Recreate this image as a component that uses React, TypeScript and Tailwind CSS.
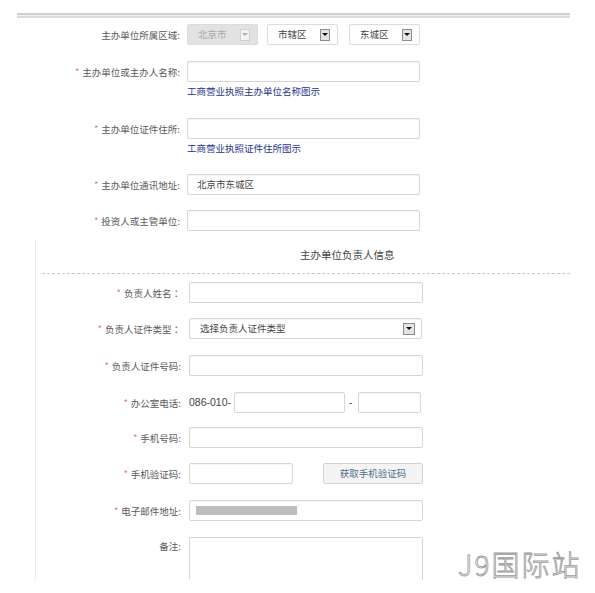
import React from "react";

const cjk = "font-['Noto_Sans_CJK_SC',sans-serif]";

function Arrow({ disabled = false, big = false }: { disabled?: boolean; big?: boolean }) {
  return (
    <span
      className={
        "flex items-center justify-center border " +
        (big ? "w-[12px] h-[12px] " : "w-[10px] h-[12px] ") +
        (disabled ? "border-[#d0d0d0] bg-[#f4f4f4]" : "border-[#8c8c8c] bg-[#e4e4e4]")
      }
    >
      <span
        className={
          "w-0 h-0 border-l-[3px] border-r-[3px] border-t-[3px] border-l-transparent border-r-transparent " +
          (disabled ? "border-t-[#b0b0b0]" : "border-t-[#111]")
        }
      />
    </span>
  );
}

function Req() {
  return <span className="text-[#e07a7a] mr-[3px]">*</span>;
}

function Box({ w, children, className = "" }: { w: string; children?: React.ReactNode; className?: string }) {
  return (
    <div
      className={
        "h-[21px] border border-[#d6d6d6] rounded-[2px] bg-white shadow-[inset_0_1px_1px_rgba(0,0,0,0.04)] flex items-center " +
        w +
        " " +
        className
      }
    >
      {children}
    </div>
  );
}

function UpperRow({ label, req = true, children, mt }: { label: string; req?: boolean; children: React.ReactNode; mt: string }) {
  return (
    <div className={"flex items-center " + mt}>
      <div className="w-[180px] text-right text-[9.5px] leading-[14px] text-[#5a5a5a]">
        {req && <Req />}
        {label}
      </div>
      <div className="ml-[7px] flex items-center">{children}</div>
    </div>
  );
}

function LowerRow({
  label,
  req = true,
  wide = false,
  children,
  mt,
  top = false,
}: {
  label: string;
  req?: boolean;
  wide?: boolean;
  children: React.ReactNode;
  mt: string;
  top?: boolean;
}) {
  return (
    <div className={"flex " + (top ? "items-start " : "items-center ") + mt}>
      <div className={"w-[145px] text-right text-[9.5px] leading-[14px] text-[#5a5a5a] " + (top ? "pt-[2px]" : "")}>
        {req && <Req />}
        {label}
        {wide ? (
          <span className="font-['Noto_Sans_CJK_TC',sans-serif]">：</span>
        ) : (
          ":"
        )}
      </div>
      <div className="ml-[8px] flex items-center">{children}</div>
    </div>
  );
}

export default function App() {
  return (
    <div className={"relative w-[595px] h-[593px] overflow-hidden bg-white pt-[13px] " + cjk}>
      {/* top double rule */}
      <div className="ml-[17px] w-[553px] h-[5px] border-t-2 border-b-2 border-t-[#cfcfcf] border-b-[#dcdcdc] bg-[#f0f0f0]" />

      <UpperRow label="主办单位所属区域:" req={false} mt="mt-[6px]">
        <div className="w-[71px] h-[21px] border border-[#dcdcdc] rounded-[2px] bg-[#e2e2e2] flex items-center justify-between pl-[10px] pr-[7px]">
          <span className="text-[9.5px] text-[#a8a8a8]">北京市</span>
          <Arrow disabled />
        </div>
        <div className="ml-[9px] w-[71px] h-[21px] border border-[#dcdcdc] rounded-[2px] bg-white flex items-center justify-between pl-[10px] pr-[7px]">
          <span className="text-[9.5px] text-[#444]">市辖区</span>
          <Arrow />
        </div>
        <div className="ml-[11px] w-[71px] h-[21px] border border-[#dcdcdc] rounded-[2px] bg-white flex items-center justify-between pl-[10px] pr-[7px]">
          <span className="text-[9.5px] text-[#444]">东城区</span>
          <Arrow />
        </div>
      </UpperRow>

      <UpperRow label="主办单位或主办人名称:" mt="mt-[16px]">
        <Box w="w-[233px]" />
      </UpperRow>
      <div className="ml-[187px] mt-[2px] text-[9.5px] leading-[14px] text-[#27348b]">工商营业执照主办单位名称图示</div>

      <UpperRow label="主办单位证件住所:" mt="mt-[20px]">
        <Box w="w-[233px]" />
      </UpperRow>
      <div className="ml-[187px] mt-[2px] text-[9.5px] leading-[14px] text-[#27348b]">工商营业执照证件住所图示</div>

      <UpperRow label="主办单位通讯地址:" mt="mt-[19px]">
        <Box w="w-[233px]" className="pl-[9px]">
          <span className="text-[9.5px] text-[#444]">北京市东城区</span>
        </Box>
      </UpperRow>

      <UpperRow label="投资人或主管单位:" mt="mt-[15px]">
        <Box w="w-[233px]" />
      </UpperRow>

      {/* lower section */}
      <div className="mt-[9px] ml-[35px] h-[340px] overflow-hidden border-l border-[#ececec]">
        <div className="pt-[8px] ml-[264px] text-[10.5px] leading-[14px] text-[#444]">主办单位负责人信息</div>
        <div className="mt-[11px] ml-[6px] w-[528px] border-t border-dashed border-[#c8c8c8]" />

        <LowerRow label="负责人姓名" wide mt="mt-[8px]">
          <Box w="w-[234px]" />
        </LowerRow>

        <LowerRow label="负责人证件类型" wide mt="mt-[15px]">
          <Box w="w-[233px]" className="justify-between pl-[10px] pr-[6px]">
            <span className="text-[9.5px] text-[#444]">选择负责人证件类型</span>
            <Arrow big />
          </Box>
        </LowerRow>

        <LowerRow label="负责人证件号码" mt="mt-[16px]">
          <Box w="w-[234px]" />
        </LowerRow>

        <LowerRow label="办公室电话" mt="mt-[16px]">
          <span className="font-['Liberation_Sans',sans-serif] text-[10.5px] text-[#444] mr-[3px]">086-010-</span>
          <Box w="w-[111px]" />
          <span className="font-['Liberation_Sans',sans-serif] text-[10px] text-[#444] ml-[4px] mr-[6px]">-</span>
          <Box w="w-[63px]" />
        </LowerRow>

        <LowerRow label="手机号码" mt="mt-[14px]">
          <Box w="w-[234px]" />
        </LowerRow>

        <LowerRow label="手机验证码" mt="mt-[15px]">
          <Box w="w-[104px]" />
          <div className="ml-[30px] w-[100px] h-[21px] border border-[#d2d2d2] rounded-[2px] bg-[#f4f4f4] flex items-center justify-center text-[9.5px] text-[#4f6f8e]">
            获取手机验证码
          </div>
        </LowerRow>

        <LowerRow label="电子邮件地址" mt="mt-[16px]">
          <Box w="w-[234px]" className="pl-[6px]">
            <div className="w-[101px] h-[9px] bg-[#bdbdbd]" />
          </Box>
        </LowerRow>

        <LowerRow label="备注" req={false} mt="mt-[16px]" top>
          <div className="w-[234px] h-[70px] border border-[#d6d6d6] rounded-[2px] bg-white" />
        </LowerRow>
      </div>

      {/* watermark */}
      <div className="absolute left-[458px] top-[546px] text-[28px] leading-[36px] tracking-[2px] text-white [-webkit-text-stroke:0.8px_#9a9a9a] font-light">
        J9国际站
      </div>
    </div>
  );
}
